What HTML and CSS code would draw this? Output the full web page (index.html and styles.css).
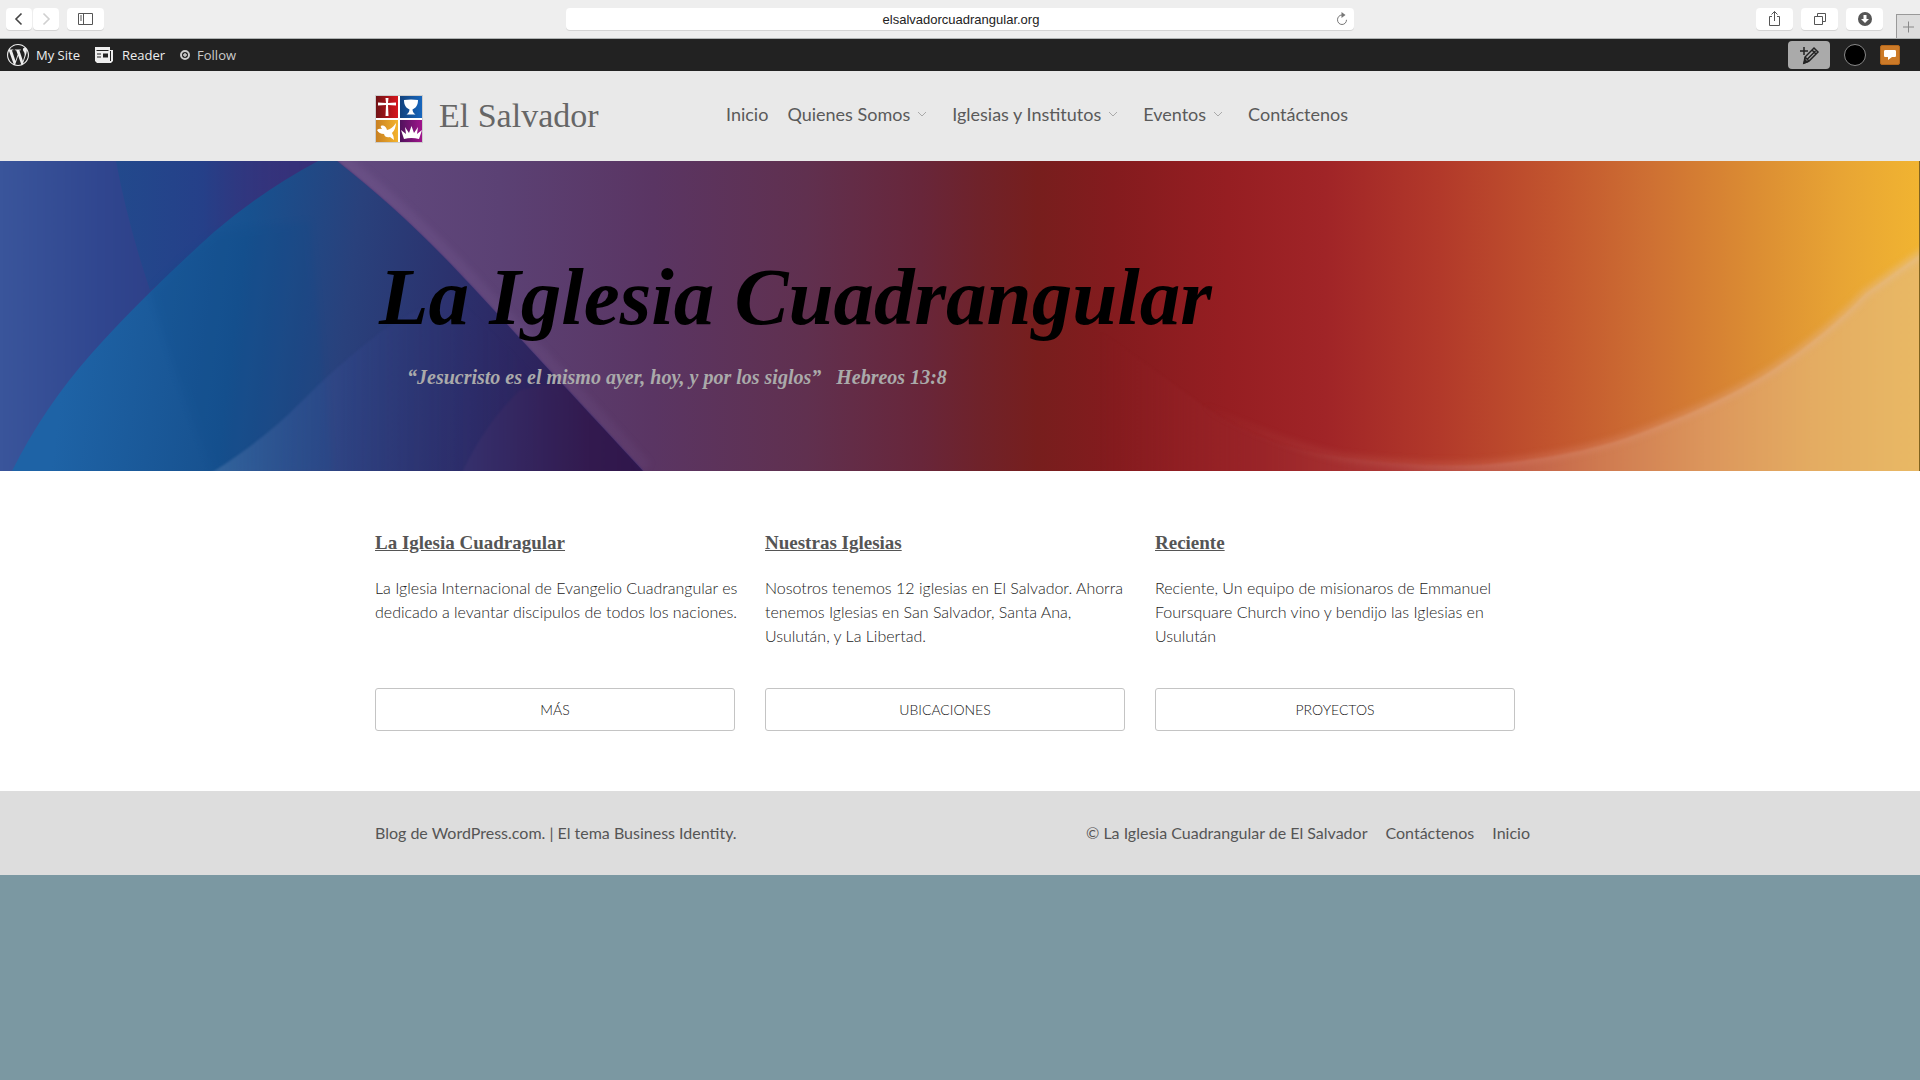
FILE: index.html
```html
<!DOCTYPE html>
<html lang="es">

<head>
    <meta charset="UTF-8">
    <meta name="viewport" content="width=device-width, initial-scale=1.0">
    <title>La Iglesia Cuadrangular | El Salvador</title>
    <link rel="stylesheet" href="styles.css">
</head>

<body>
    <!-- Browser toolbar -->
    <div class="toolbar">
        <div class="tools">
            <div class="history">
                <button class="tool small" type="button" aria-label="Back">
                    <svg width="26" height="22" viewBox="0 0 26 22"><path d="M15.5 5.5L10 11l5.5 5.5" fill="none" stroke="#444" stroke-width="1.6" /></svg>
                </button>
                <button class="tool small" type="button" aria-label="Forward">
                    <svg width="26" height="22" viewBox="0 0 26 22"><path d="M10.5 5.5L16 11l-5.5 5.5" fill="none" stroke="#d0d0d0" stroke-width="1.6" /></svg>
                </button>
            </div>
            <button class="tool" type="button" aria-label="Sidebar">
                <svg width="37" height="22" viewBox="0 0 37 22" fill="none" stroke="#555"><path d="M11.5 5.5h14v11h-14zM16.5 5.5v11M13 8h2M13 10h2M13 12h2" /></svg>
            </button>
        </div>
        <form class="address">
            <input type="text" aria-label="Address" value="elsalvadorcuadrangular.org">
            <button class="reload" type="button" aria-label="Reload">
                <svg width="12" height="14" viewBox="0 0 12 14"><path d="M6 3C3.4 3 1.5 5.2 1.5 7.8S3.4 12.5 6 12.5s4.5-2.1 4.5-4.7" fill="none" stroke="#777" /><path d="M5.5 0v6L9.5 3z" fill="#777" /></svg>
            </button>
        </form>
        <div class="tools right">
            <button class="tool" type="button" aria-label="Share">
                <svg width="37" height="22" viewBox="0 0 37 22" fill="none" stroke="#555"><path d="M16 8.5h-2.5v9h10v-9H21M18.5 13V3.5M15.5 6.5l3-3 3 3" /></svg>
            </button>
            <button class="tool" type="button" aria-label="Tabs">
                <svg width="37" height="22" viewBox="0 0 37 22" fill="none" stroke="#555"><path d="M13.5 8.5h8v8h-8zM16.5 8V5.5h8v8H22" /></svg>
            </button>
            <button class="tool" type="button" aria-label="Downloads">
                <svg width="37" height="22" viewBox="0 0 37 22"><circle cx="19" cy="11" r="7" fill="#555" /><path d="M17.5 7h3v4h2.5l-4 4-4-4h2.5z" fill="#fff" /></svg>
            </button>
            <button class="newtab" type="button" aria-label="New tab">
                <svg width="24" height="24" viewBox="0 0 24 24"><path d="M11.5 6.5v11M6 12h11" stroke="#888" /></svg>
            </button>
        </div>
    </div>

    <!-- WordPress admin bar -->
    <div class="adminbar">
        <a class="site" href="#">
            <svg width="22" height="22" viewBox="0 0 24 24" fill="#eee"><path d="M21.469 6.825c.84 1.537 1.318 3.3 1.318 5.175 0 3.979-2.156 7.456-5.363 9.325l3.295-9.527c.615-1.54.82-2.771.82-3.864 0-.405-.026-.78-.07-1.11m-7.981.105c.647-.03 1.232-.105 1.232-.105.582-.075.514-.93-.067-.899 0 0-1.755.135-2.88.135-1.064 0-2.85-.15-2.85-.15-.585-.03-.661.855-.075.885 0 0 .54.061 1.125.09l1.68 4.605-2.37 7.08L5.354 6.9c.649-.03 1.234-.1 1.234-.1.585-.075.516-.93-.065-.896 0 0-1.746.138-2.874.138-.2 0-.438-.008-.69-.015C4.911 3.15 8.235 1.215 12 1.215c2.809 0 5.365 1.072 7.286 2.833-.046-.003-.091-.009-.141-.009-1.06 0-1.812.923-1.812 1.914 0 .89.513 1.643 1.06 2.531.411.72.89 1.643.89 2.977 0 .915-.354 1.994-.821 3.479l-1.075 3.585-3.9-11.61zM12 22.784c-1.059 0-2.081-.153-3.048-.437l3.237-9.406 3.315 9.087c.024.053.05.101.078.149-1.12.393-2.325.609-3.582.609M1.211 12c0-1.564.336-3.05.935-4.39L7.29 21.709C3.694 19.96 1.212 16.271 1.211 12M12 0C5.385 0 0 5.385 0 12s5.385 12 12 12 12-5.385 12-12S18.615 0 12 0" /></svg>
            My Site
        </a>
        <a class="reader" href="#">
            <svg width="18" height="16" viewBox="0 0 18 16"><path d="M0 0h15v3h3v11l-2 2H2l-2-2z" fill="#eee" /><path d="M1.5 3.5h12M2 7h4M2 10h4" stroke="#222" fill="none" /><path d="M15.5 4v10" stroke="#222" /><path d="M8 6.5h5v4H8z" fill="#222" /></svg>
            Reader
        </a>
        <a class="follow" href="#">
            <svg width="10" height="10" viewBox="0 0 10 10"><circle cx="5" cy="5" r="4" fill="none" stroke="#ccc" stroke-width="2" /><path d="M5 3v4M3 5h4" stroke="#ccc" stroke-width="1.4" /></svg>
            Follow
        </a>
        <div class="account">
            <button class="compose" type="button" aria-label="New post">
                <svg width="22" height="20" viewBox="0 0 22 20" fill="none" stroke="#222" stroke-width="1.5"><path d="M2 6h8M6 2v8" /><path d="M6 18l1-6 9-9 4 4-9 9zM7 12l4 4M9.5 14l8-8M14 5l4 4" /><path d="M6 18l1-3 2 2z" fill="#222" /></svg>
            </button>
            <button class="avatar" type="button" aria-label="Profile"></button>
            <button class="notes" type="button" aria-label="Notifications">
                <svg width="14" height="12" viewBox="0 0 14 12"><path d="M2.5 1h9C12.5 1 13 1.5 13 2.5v4c0 1-.5 1.5-1.5 1.5H9l-4 3V8H2.5C1.5 8 1 7.5 1 6.5v-4C1 1.5 1.5 1 2.5 1z" fill="#fff" /></svg>
            </button>
        </div>
    </div>

    <header class="header">
        <div class="container">
            <a class="brand" href="#">
                <svg width="48" height="48" viewBox="0 0 48 48">
                    <defs>
                        <linearGradient id="red"><stop offset="0" stop-color="#701216" /><stop offset="1" stop-color="#d8161c" /></linearGradient>
                        <linearGradient id="blue"><stop offset="0" stop-color="#12427c" /><stop offset="1" stop-color="#1766bd" /></linearGradient>
                        <linearGradient id="gold"><stop offset="0" stop-color="#c88022" /><stop offset="1" stop-color="#f4b32c" /></linearGradient>
                        <linearGradient id="violet"><stop offset="0" stop-color="#50125c" /><stop offset="1" stop-color="#a0148c" /></linearGradient>
                    </defs>
                    <path d="M0 0h48v48H0z" fill="#ccc" />
                    <path d="M1 1h46v46H1z" fill="#fff" />
                    <path d="M1 1h22v22H1z" fill="url(#red)" />
                    <path d="M25 1h22v22H25z" fill="url(#blue)" />
                    <path d="M1 25h22v22H1z" fill="url(#gold)" />
                    <path d="M25 25h22v22H25z" fill="url(#violet)" />
                    <g fill="#fff">
                        <path d="M10.5 3h3L13 8l8-.5v3L13 10l.5 11h-3L11 10l-8 .5v-3L11 8z" />
                        <path d="M29 5q7-1 14 0c0 5-2 8-5.5 9.5.2 2 .5 3 3 5h-9c2.5-2 2.8-3 3-5C31 13 29 10 29 5z" />
                        <path d="M2 35q2-2 5-1-3-4 1-3.5Q11 31 12 35q5-1 9-7-.5 7-4 10 2 3 2 7l-4-3q-5 1-6-3-5 0-7-4z" />
                        <path d="M29 44l-3-9 5 4-1-7 4 6 2.500-7 2.500 7 4-6-1 7 5-4-3 9q-7.500-2-15 0z" />
                    </g>
                </svg>
                <span>El Salvador</span>
            </a>
            <nav class="menu">
                <a href="#">Inicio</a>
                <a class="parent" href="#">Quienes Somos <svg width="10" height="6" viewBox="0 0 10 6"><path d="M1 1l4 4 4-4" /></svg></a>
                <a class="parent" href="#">Iglesias y Institutos <svg width="10" height="6" viewBox="0 0 10 6"><path d="M1 1l4 4 4-4" /></svg></a>
                <a class="parent" href="#">Eventos <svg width="10" height="6" viewBox="0 0 10 6"><path d="M1 1l4 4 4-4" /></svg></a>
                <a href="#">Contáctenos</a>
            </nav>
        </div>
    </header>

    <section class="hero">
        <!-- Backdrop -->
        <svg class="backdrop" viewBox="0 0 1920 310" preserveAspectRatio="none">
            <defs>
                <linearGradient id="base" gradientUnits="userSpaceOnUse" x1="0" y1="0" x2="1920" y2="0">
                    <stop offset=".17" stop-color="#634b80" />
                    <stop offset=".26" stop-color="#5b4174" />
                    <stop offset=".34" stop-color="#5a3563" />
                    <stop offset=".42" stop-color="#60304f" />
                    <stop offset=".48" stop-color="#68263a" />
                    <stop offset=".51" stop-color="#6f222a" />
                    <stop offset=".54" stop-color="#771e1d" />
                    <stop offset=".58" stop-color="#841b1e" />
                    <stop offset=".64" stop-color="#961e22" />
                    <stop offset=".69" stop-color="#a02427" />
                    <stop offset=".75" stop-color="#b2392a" />
                    <stop offset=".81" stop-color="#c2552e" />
                    <stop offset=".86" stop-color="#ce7033" />
                    <stop offset=".92" stop-color="#dd9033" />
                    <stop offset=".96" stop-color="#e8a534" />
                    <stop offset="1" stop-color="#f1b431" />
                </linearGradient>
                <linearGradient id="left" gradientUnits="userSpaceOnUse" x1="0" y1="0" x2="340" y2="0">
                    <stop offset="0" stop-color="#3a559b" />
                    <stop offset=".3" stop-color="#30468f" />
                    <stop offset=".6" stop-color="#2e3b82" />
                    <stop offset="1" stop-color="#3a2c76" />
                </linearGradient>
                <linearGradient id="wedge" gradientUnits="userSpaceOnUse" x1="116" y1="0" x2="290" y2="0">
                    <stop offset="0" stop-color="#22498c" />
                    <stop offset=".5" stop-color="#23418a" stop-opacity=".8" />
                    <stop offset="1" stop-color="#3a2c76" stop-opacity="0" />
                </linearGradient>
                <linearGradient id="arc" gradientUnits="userSpaceOnUse" x1="60" y1="240" x2="600" y2="310">
                    <stop offset="0" stop-color="#1e63a6" />
                    <stop offset=".3" stop-color="#17518f" />
                    <stop offset=".5" stop-color="#29417c" />
                    <stop offset=".75" stop-color="#2c2c68" />
                    <stop offset="1" stop-color="#2f1950" />
                </linearGradient>
                <linearGradient id="haze" gradientUnits="userSpaceOnUse" x1="210" y1="0" x2="560" y2="0">
                    <stop offset="0" stop-color="#6c8cba" stop-opacity=".35" />
                    <stop offset=".4" stop-color="#4050a0" stop-opacity=".2" />
                    <stop offset="1" stop-color="#302060" stop-opacity="0" />
                </linearGradient>
                <linearGradient id="plum" gradientUnits="userSpaceOnUse" x1="460" y1="0" x2="640" y2="0">
                    <stop offset="0" stop-color="#3a3370" />
                    <stop offset=".7" stop-color="#351a4e" />
                    <stop offset="1" stop-color="#30164a" />
                </linearGradient>
                <linearGradient id="glow" gradientUnits="userSpaceOnUse" x1="0" y1="0" x2="0" y2="310">
                    <stop offset="0" stop-color="#80649c" stop-opacity=".25" />
                    <stop offset="1" stop-color="#80649c" stop-opacity=".1" />
                </linearGradient>
                <linearGradient id="sand" gradientUnits="userSpaceOnUse" x1="1100" y1="0" x2="1920" y2="0">
                    <stop offset="0" stop-color="#8c1f24" stop-opacity="0" />
                    <stop offset=".2" stop-color="#9a2529" stop-opacity=".9" />
                    <stop offset=".36" stop-color="#ac3836" />
                    <stop offset=".49" stop-color="#c05c48" />
                    <stop offset=".61" stop-color="#cf7a50" />
                    <stop offset=".74" stop-color="#dc965c" />
                    <stop offset=".87" stop-color="#e4ac62" />
                    <stop offset="1" stop-color="#e9b965" />
                </linearGradient>
                <linearGradient id="rim" gradientUnits="userSpaceOnUse" x1="1200" y1="0" x2="1920" y2="0">
                    <stop offset="0" stop-color="#d09080" stop-opacity="0" />
                    <stop offset=".4" stop-color="#d87c68" stop-opacity=".3" />
                    <stop offset="1" stop-color="#e6c090" stop-opacity=".6" />
                </linearGradient>
                <filter id="soft" color-interpolation-filters="sRGB"><feGaussianBlur stdDeviation="3" /></filter>
                <filter id="edge" color-interpolation-filters="sRGB"><feGaussianBlur stdDeviation="1" /></filter>
            </defs>
            <path d="M0 0h1920v310H0z" fill="url(#base)" />
            <path d="M337 0C390 42 430 80 478 132S580 242 643 310" fill="none" stroke="url(#glow)" stroke-width="22" filter="url(#soft)" />
            <path d="M-5-5H332L337 0C390 42 430 80 478 132S580 242 643 310v10H-5z" fill="url(#left)" filter="url(#edge)" />
            <path d="M116 0Q128 64 150 129L318 0z" fill="url(#wedge)" />
            <path d="M12 310Q44 246 92 192T214 71Q262 30 318 0h19C390 42 430 80 478 132S580 242 643 310z" fill="url(#arc)" />
            <path d="M150 129Q175 216 212 310h120L310 60 214 71Q180 98 150 129z" fill="#0d4a88" opacity=".2" filter="url(#soft)" />
            <path d="M208 314Q265 278 300 242T383 169L450 130 640 316z" fill="url(#haze)" filter="url(#edge)" />
            <path d="M462 312Q484 264 520 229L560 221 643 312z" fill="url(#plum)" opacity=".7" filter="url(#edge)" />
            <path d="M1100 170Q1150 206 1205 246T1340 296Q1438 310 1511 301C1560 295 1600 287 1640 272S1720 240 1756 219 1835 165 1866 132L1925 90v225H1100z" fill="url(#sand)" filter="url(#edge)" />
            <path d="M1200 243Q1270 280 1340 296 1438 310 1511 301C1560 295 1600 287 1640 272S1720 240 1756 219 1835 165 1866 132L1925 90" fill="none" stroke="url(#rim)" stroke-width="8" filter="url(#soft)" />
            <path d="M1919 0h1v310h-1z" fill="#80631f" />
        </svg>
        <div class="container">
            <h1>La Iglesia Cuadrangular</h1>
            <p>“Jesucristo es el mismo ayer, hoy, y por los siglos” &nbsp; Hebreos 13:8</p>
        </div>
    </section>

    <main class="content">
        <div class="container">
            <article class="column">
                <h2><a href="#">La Iglesia Cuadragular</a></h2>
                <p>La Iglesia Internacional de Evangelio Cuadrangular es dedicado a levantar discipulos de todos los naciones.</p>
                <a class="more" href="#">MÁS</a>
            </article>
            <article class="column">
                <h2><a href="#">Nuestras Iglesias</a></h2>
                <p>Nosotros tenemos 12 iglesias en El Salvador. Ahorra tenemos Iglesias en San Salvador, Santa Ana, Usulután, y La Libertad.</p>
                <a class="more" href="#">UBICACIONES</a>
            </article>
            <article class="column">
                <h2><a href="#">Reciente</a></h2>
                <p>Reciente, Un equipo de misionaros de Emmanuel Foursquare Church vino y bendijo las Iglesias en Usulután</p>
                <a class="more" href="#">PROYECTOS</a>
            </article>
        </div>
    </main>

    <footer class="footer">
        <div class="container">
            <p><a href="#">Blog de WordPress.com</a>. | El tema <a href="#">Business Identity</a>.</p>
            <nav>
                <a href="#">© La Iglesia Cuadrangular de El Salvador</a>
                <a href="#">Contáctenos</a>
                <a href="#">Inicio</a>
            </nav>
        </div>
    </footer>
</body>

</html>
```
FILE: styles.css
```css
* {
    padding: 0;
    margin: 0;
    box-sizing: border-box;
}

body {
    background-color: #7b98a2;
    font-family: Lato, sans-serif;
    font-size: 16px;
    line-height: 24px;
    color: #555;
}

a {
    color: inherit;
    text-decoration: none;
}

button {
    border: none;
    background: none;
    cursor: pointer;
}

svg {
    display: block;
    flex: none;
}

.container {
    width: 100%;
    max-width: 1170px;
    margin: 0 auto;
    padding-right: 30px;
}

/* Browser toolbar */
.toolbar {
    display: grid;
    grid-template-columns: 1fr 41% 1fr;
    align-items: center;
    height: 39px;
    background-color: #eee;
    border-bottom: 1px solid #aeb2b2;
}

.tools {
    display: flex;
    align-items: center;
    gap: 8px;
    padding-left: 6px;
}

.tools.right {
    justify-content: flex-end;
    padding-left: 0;
}

.history {
    display: flex;
    gap: 1px;
}

.tool {
    width: 37px;
    height: 22px;
    background-color: #fff;
    border-radius: 4px;
    box-shadow: 0 1px 0 #d4d4d4;
}

.tool.small {
    width: 26px;
}

.newtab {
    align-self: flex-end;
    width: 24px;
    height: 24px;
    margin-left: 5px;
    margin-top: 14px;
    background-color: #ddd;
    border-top: 1px solid #999;
    border-left: 1px solid #999;
}

.address {
    display: flex;
    align-items: center;
    height: 22px;
    padding: 0 6px 0 20px;
    background-color: #fff;
    border-radius: 4px;
    box-shadow: 0 1px 0 #d4d4d4;
}

.address input {
    flex: 1;
    border: none;
    outline: none;
    background: none;
    font-family: "Liberation Sans", sans-serif;
    font-size: 13px;
    color: #222;
    text-align: center;
}

/* Admin bar */
.adminbar {
    display: flex;
    align-items: center;
    height: 32px;
    padding: 0 20px 0 7px;
    background-color: #222;
    color: #eee;
    font-family: "Open Sans", sans-serif;
    font-size: 13px;
}

.adminbar a {
    display: flex;
    align-items: center;
    gap: 7px;
    margin-right: 15px;
}

.adminbar .site,
.adminbar .reader {
    font-weight: 500;
}

.adminbar .reader {
    gap: 9px;
}

.adminbar .follow {
    color: #ccc;
    margin-right: 0;
}

.account {
    display: flex;
    align-items: center;
    gap: 14px;
    margin-left: auto;
}

.compose {
    height: 28px;
    padding: 0 10px;
    background-color: #aaa;
    border-radius: 4px;
}

.avatar {
    width: 22px;
    height: 22px;
    background-color: #000;
    border: 1px solid #888;
    border-radius: 50%;
}

.notes {
    width: 20px;
    height: 20px;
    padding-left: 2px;
    background-color: #cc7a28;
    border: 1px solid #b4661a;
    border-radius: 2px;
}

/* Header */
.header {
    background-color: #e9e9e9;
    padding: 24px 0 18px;
}

.header .container {
    display: flex;
    align-items: flex-start;
}

.brand {
    display: flex;
    align-items: flex-start;
    gap: 16px;
    flex: 0 0 351px;
    font-family: "Liberation Serif", serif;
    font-size: 34px;
    line-height: 42px;
    color: #666;
}

.menu {
    display: flex;
    align-items: center;
    gap: 19px;
    font-size: 18px;
    line-height: 38px;
    color: #5a5a5a;
}

.menu .parent {
    display: flex;
    align-items: center;
    gap: 7px;
    padding-right: 6px;
}

.menu svg path {
    fill: none;
    stroke: #aaa;
    stroke-width: 1;
}

/* Hero */
.hero {
    position: relative;
    padding: 92px 0 82px;
}

.backdrop {
    position: absolute;
    top: 0;
    left: 0;
    width: 100%;
    height: 100%;
}

.hero .container {
    position: relative;
}

.hero h1 {
    padding-left: 4px;
    font-family: "Liberation Serif", serif;
    font-size: 81px;
    line-height: 88px;
    font-style: italic;
    font-weight: 700;
    color: #000;
}

.hero p {
    margin-top: 24px;
    padding-left: 32px;
    font-family: "Liberation Serif", serif;
    font-size: 20px;
    font-style: italic;
    font-weight: 700;
    color: #aaa;
}

/* Content */
.content {
    background-color: #fff;
    padding: 60px 0;
}

.content .container {
    display: grid;
    grid-template-columns: repeat(3, 1fr);
    gap: 30px;
}

.column {
    display: flex;
    flex-direction: column;
}

.column h2 {
    margin-bottom: 22px;
    font-family: "Liberation Serif", serif;
    font-size: 19px;
    line-height: 23px;
}

.column h2 a {
    text-decoration: underline;
}

.column p {
    margin-right: -8px;
    margin-bottom: 40px;
    font-weight: 300;
    color: #222;
}

.more {
    margin-top: auto;
    padding: 9px 0;
    border: 1px solid #c4c4c4;
    border-radius: 3px;
    font-size: 14px;
    line-height: 23px;
    font-weight: 300;
    color: #111;
    text-align: center;
}

/* Footer */
.footer {
    background-color: #ddd;
    padding: 30px 0;
    color: #555;
}

.footer .container {
    display: flex;
    justify-content: space-between;
    padding-right: 15px;
}

.footer nav {
    display: flex;
    gap: 18px;
}
```
